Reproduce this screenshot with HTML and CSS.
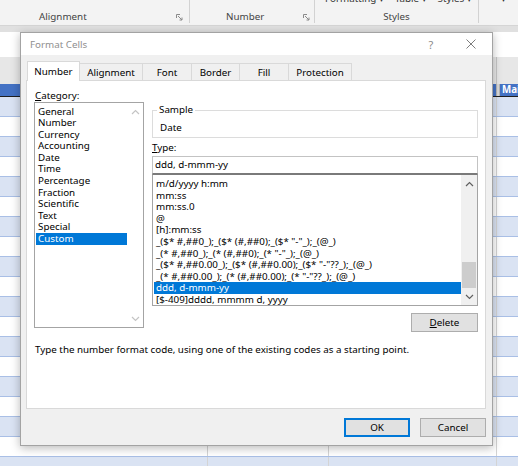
FILE: index.html
```html
<!DOCTYPE html>
<html lang="en">
<head>
<meta charset="utf-8">
<title>Format Cells</title>
<link rel="stylesheet" href="styles.css">
</head>
<body>
<div class="app">
  <div class="ribbon">
    <div class="rgroup g1">
      <div class="rtop"></div>
      <div class="rfoot"><span class="rlabel">Alignment</span>
        <svg class="launch" width="7" height="7" viewBox="0 0 7 7"><path d="M0.5 4V0.5H4" fill="none" stroke="#8a8a8a"/><path d="M2 2L6 6M6 3.5V6H3.5" fill="none" stroke="#8a8a8a"/></svg>
      </div>
    </div>
    <div class="rgroup g2">
      <div class="rtop"></div>
      <div class="rfoot"><span class="rlabel">Number</span>
        <svg class="launch" width="7" height="7" viewBox="0 0 7 7"><path d="M0.5 4V0.5H4" fill="none" stroke="#8a8a8a"/><path d="M2 2L6 6M6 3.5V6H3.5" fill="none" stroke="#8a8a8a"/></svg>
      </div>
    </div>
    <div class="rgroup g3">
      <div class="rtop"><span class="rbtn">Formatting ▾</span><span class="rbtn">Table ▾</span><span class="rbtn">Styles ▾</span></div>
      <div class="rfoot center"><span class="rlabel">Styles</span></div>
    </div>
    <div class="rgroup g4">
      <div class="rtop"><span class="rbtn">▾</span></div>
    </div>
  </div>
  <div class="band"></div>
  <div class="fbar"></div>
  <div class="colbar"><div class="cb-a"></div><div class="cb-b"></div></div>
  <div class="sheet">
    <div class="hrow"><div class="hc hc1"></div><div class="hc hc2"></div><div class="hc hc3">Mai</div></div>
    <div class="row blue"><div class="c"></div><div class="c"></div><div class="c"></div><div class="c"></div></div>
    <div class="row"><div class="c"></div><div class="c"></div><div class="c"></div><div class="c"></div></div>
    <div class="row blue"><div class="c"></div><div class="c"></div><div class="c"></div><div class="c"></div></div>
    <div class="row"><div class="c"></div><div class="c"></div><div class="c"></div><div class="c"></div></div>
    <div class="row blue"><div class="c"></div><div class="c"></div><div class="c"></div><div class="c"></div></div>
    <div class="row"><div class="c"></div><div class="c"></div><div class="c"></div><div class="c"></div></div>
    <div class="row blue"><div class="c"></div><div class="c"></div><div class="c"></div><div class="c"></div></div>
    <div class="row"><div class="c"></div><div class="c"></div><div class="c"></div><div class="c"></div></div>
    <div class="row blue"><div class="c"></div><div class="c"></div><div class="c"></div><div class="c"></div></div>
    <div class="row"><div class="c"></div><div class="c"></div><div class="c"></div><div class="c"></div></div>
    <div class="row blue"><div class="c"></div><div class="c"></div><div class="c"></div><div class="c"></div></div>
    <div class="row"><div class="c"></div><div class="c"></div><div class="c"></div><div class="c"></div></div>
    <div class="row blue"><div class="c"></div><div class="c"></div><div class="c"></div><div class="c"></div></div>
    <div class="row"><div class="c"></div><div class="c"></div><div class="c"></div><div class="c"></div></div>
    <div class="row blue"><div class="c"></div><div class="c"></div><div class="c"></div><div class="c"></div></div>
    <div class="row"><div class="c"></div><div class="c"></div><div class="c"></div><div class="c"></div></div>
    <div class="row blue"><div class="c"></div><div class="c"></div><div class="c"></div><div class="c"></div></div>
    <div class="row"><div class="c"></div><div class="c"></div><div class="c"></div><div class="c"></div></div>
    <div class="row blue"><div class="c"></div><div class="c"></div><div class="c"></div><div class="c"></div></div>
  </div>

  <div class="dialog">
    <div class="titlebar">
      <span class="title">Format Cells</span>
      <span class="help">?</span>
      <span class="closebtn"><svg width="10" height="10" viewBox="0 0 10 10"><path d="M0.5 0.5L9.5 9.5M9.5 0.5L0.5 9.5" stroke="#7d7d7d" stroke-width="1" fill="none"/></svg></span>
    </div>
    <div class="dbody">
      <div class="tabs">
        <div class="tab sel t1">Number</div>
        <div class="tab t2">Alignment</div>
        <div class="tab t3">Font</div>
        <div class="tab t4">Border</div>
        <div class="tab t5">Fill</div>
        <div class="tab t6">Protection</div>
      </div>
      <div class="panel">
        <div class="cols">
          <div class="left">
            <div class="label"><u>C</u>ategory:</div>
            <div class="catlist">
              <div class="items">
                <div class="citem">General</div>
                <div class="citem">Number</div>
                <div class="citem">Currency</div>
                <div class="citem">Accounting</div>
                <div class="citem">Date</div>
                <div class="citem">Time</div>
                <div class="citem">Percentage</div>
                <div class="citem">Fraction</div>
                <div class="citem">Scientific</div>
                <div class="citem">Text</div>
                <div class="citem">Special</div>
                <div class="citem sel">Custom</div>
              </div>
              <div class="vscroll light">
                <div class="sbtn"><svg width="9" height="6" viewBox="0 0 9 6"><path d="M1 5L4.5 1.5L8 5" fill="none" stroke="#c4c4c4" stroke-width="1.2"/></svg></div>
                <div class="sbtn"><svg width="9" height="6" viewBox="0 0 9 6"><path d="M1 1L4.5 4.5L8 1" fill="none" stroke="#c4c4c4" stroke-width="1.2"/></svg></div>
              </div>
            </div>
          </div>
          <div class="right">
            <fieldset class="sample">
              <legend>Sample</legend>
              <div class="sampletext">Date</div>
            </fieldset>
            <div class="label typelabel"><u>T</u>ype:</div>
            <div class="typein">ddd, d-mmm-yy</div>
            <div class="typelist">
              <div class="items titems">
                <div class="titem">m/d/yyyy h:mm</div>
                <div class="titem">mm:ss</div>
                <div class="titem">mm:ss.0</div>
                <div class="titem">@</div>
                <div class="titem">[h]:mm:ss</div>
                <div class="titem">_($* #,##0_);_($* (#,##0);_($* "-"_);_(@_)</div>
                <div class="titem">_(* #,##0_);_(* (#,##0);_(* "-"_);_(@_)</div>
                <div class="titem">_($* #,##0.00_);_($* (#,##0.00);_($* "-"??_);_(@_)</div>
                <div class="titem">_(* #,##0.00_);_(* (#,##0.00);_(* "-"??_);_(@_)</div>
                <div class="titem sel">ddd, d-mmm-yy</div>
                <div class="titem">[$-409]dddd, mmmm d, yyyy</div>
              </div>
              <div class="vscroll dark">
                <div class="sbtn"><svg width="9" height="6" viewBox="0 0 9 6"><path d="M1 5L4.5 1.5L8 5" fill="none" stroke="#606060" stroke-width="1.2"/></svg></div>
                <div class="track"><div class="thumb"></div></div>
                <div class="sbtn"><svg width="9" height="6" viewBox="0 0 9 6"><path d="M1 1L4.5 4.5L8 1" fill="none" stroke="#606060" stroke-width="1.2"/></svg></div>
              </div>
            </div>
            <div class="btn delete"><u>D</u>elete</div>
          </div>
        </div>
        <div class="desc">Type the number format code, using one of the existing codes as a starting point.</div>
      </div>
      <div class="footer">
        <div class="btn ok">OK</div>
        <div class="btn">Cancel</div>
      </div>
    </div>
  </div>
</div>
</body>
</html>
```

FILE: styles.css
```css
* { box-sizing: border-box; }
html, body { margin: 0; padding: 0; }
body {
  width: 518px; height: 466px; overflow: hidden; background: #fff;
  font-family: "Noto Sans", "DejaVu Sans", sans-serif; font-size: 9.8px; color: #000;
}
.app { position: relative; width: 518px; height: 466px; overflow: hidden; }

/* ribbon */
.ribbon { display: flex; height: 26px; background: #f3f3f3; border-bottom: 1px solid #d5d5d5; }
.rgroup { display: flex; flex-direction: column; height: 23px; border-right: 1px solid #d2d2d2; }
.g1 { width: 190px; }
.g2 { width: 125px; }
.g3 { width: 164px; }
.g4 { flex: 1; border-right: 0; }
.rtop { height: 11px; overflow: hidden; display: flex; align-items: flex-start; color: #333; }
.rbtn { margin-top: -7px; line-height: 12px; white-space: nowrap; }
.g3 .rtop { padding-left: 10px; gap: 11px; }
.g4 .rtop { padding-left: 22px; }
.rfoot { height: 13px; display: flex; align-items: center; justify-content: space-between; color: #444; }
.g1 .rfoot { padding: 0 6px 0 39px; }
.g2 .rfoot { padding: 0 4px 0 36px; }
.rfoot.center { justify-content: center; }
.launch { display: block; margin-top: 2px; }

.band { height: 6px; background: #e0e0e0; }
.fbar { height: 25px; background: #fff; }
.colbar { height: 27px; display: grid; grid-template-columns: 497px 1fr; background: #e7e7e7; }
.cb-a { border-right: 1px solid #c6c6c6; }

/* sheet */
.hrow { height: 13px; display: grid; grid-template-columns: 496px 4px 1fr; border-bottom: 1px solid #1e1e1e; }
.hc { background: #4472c4; }
.hc2 { background: #d9d9d9; border-left: 1px solid #b5b5b5; border-right: 1px solid #b5b5b5; }
.hc3 { color: #fff; font-weight: bold; padding-left: 2px; line-height: 12px; }
.row { height: 20px; display: grid; grid-template-columns: 208px 121px 168px 1fr; border-bottom: 1px solid #a9bfe6; }
.row.blue { background: #dae3f3; }
.c { border-right: 1px solid #d4d4d4; }
.c:last-child { border-right: 0; }

/* dialog */
.dialog {
  position: absolute; left: 20px; top: 32px; width: 473px; height: 414px;
  background: #f0f0f0; border: 1px solid #a3a3a3;
  box-shadow: 0 2px 9px rgba(0, 0, 0, 0.28);
  display: flex; flex-direction: column;
}
.titlebar { height: 22px; background: #fff; display: flex; align-items: center; padding: 0 11px 0 9px; color: #8f8f8f; }
.title { flex: 1; }
.help { width: 20px; text-align: center; font-size: 11px; color: #8a8a8a; }
.closebtn { width: 20px; margin-left: 20px; display: flex; justify-content: center; }
.closebtn svg { display: block; }

.dbody { flex: 1; padding: 6px 6px 0 5px; display: flex; flex-direction: column; }
.tabs { height: 19px; display: flex; align-items: flex-end; padding-left: 1px; position: relative; z-index: 1; }
.tab {
  height: 17px; border: 1px solid #d9d9d9; border-bottom: 0; border-left: 0;
  background: #f0f0f0; display: flex; align-items: center; justify-content: center;
}
.tab:first-child { border-left: 1px solid #d9d9d9; }
.tab.sel { height: 20px; background: #fff; margin-bottom: -1px; }
.t1 { width: 53px; }
.t2 { width: 63px; }
.t3 { width: 49px; }
.t4 { width: 48px; }
.t5 { width: 49px; }
.t6 { width: 63px; }

.panel { height: 329px; background: #fff; border: 1px solid #d9d9d9; padding: 8px 7px 0 7px; display: flex; flex-direction: column; }
.cols { display: flex; gap: 8px; align-items: flex-start; }
.left { width: 110px; }
.right { flex: 1; margin-top: 15px; display: flex; flex-direction: column; }
.label { height: 13px; line-height: 13px; padding-left: 1px; }

.catlist { height: 226px; border: 1px solid #a4a4a4; display: flex; }
.items { flex: 1; overflow: hidden; padding-top: 2.5px; }
.citem { height: 11.6px; line-height: 11.6px; padding-left: 2px; margin-left: 1px; white-space: nowrap; }
.sel.citem, .sel.titem { background: #0078d7; color: #fff; }

.vscroll { width: 16px; display: flex; flex-direction: column; justify-content: space-between; }
.vscroll.light { background: #fff; }
.vscroll.dark { background: #f0f0f0; }
.sbtn { height: 17px; display: flex; align-items: center; justify-content: center; }
.sbtn svg { display: block; }
.track { flex: 1; display: flex; flex-direction: column; justify-content: flex-end; }
.thumb { height: 26px; background: #cdcdcd; margin: 0 1px 0 1px; }

.sample { margin: 0; border: 1px solid #dcdcdc; padding: 6px 7px 3px 7px; }
.sample legend { line-height: 12px; padding: 0 2px; margin-left: -3px; }
.sampletext { line-height: 12px; }
.typelabel { margin-top: 3px; margin-bottom: 2px; padding-left: 0; }
.typein { height: 18px; border: 1px solid #c3c3c3; border-bottom-color: #7a7a7a; padding-left: 2px; line-height: 16px; }
.typelist { height: 132px; border: 1px solid #a4a4a4; border-top-color: #7a7a7a; display: flex; }
.titems { padding-top: 3px; }
.titem { height: 11.6px; line-height: 11.6px; padding-left: 2px; margin-left: 1px; white-space: nowrap; }

.btn { height: 19px; width: 66px; background: #e1e1e1; border: 1px solid #adadad; display: flex; align-items: center; justify-content: center; }
.delete { align-self: flex-end; width: 67px; margin-top: 7px; }
.desc { margin-top: 12px; line-height: 12px; padding-left: 1px; white-space: nowrap; }

.footer { height: 36px; padding-top: 9px; display: flex; justify-content: flex-end; gap: 10px; }
.ok { border-color: #0078d7; box-shadow: inset 0 0 0 1px #0078d7; }
```
